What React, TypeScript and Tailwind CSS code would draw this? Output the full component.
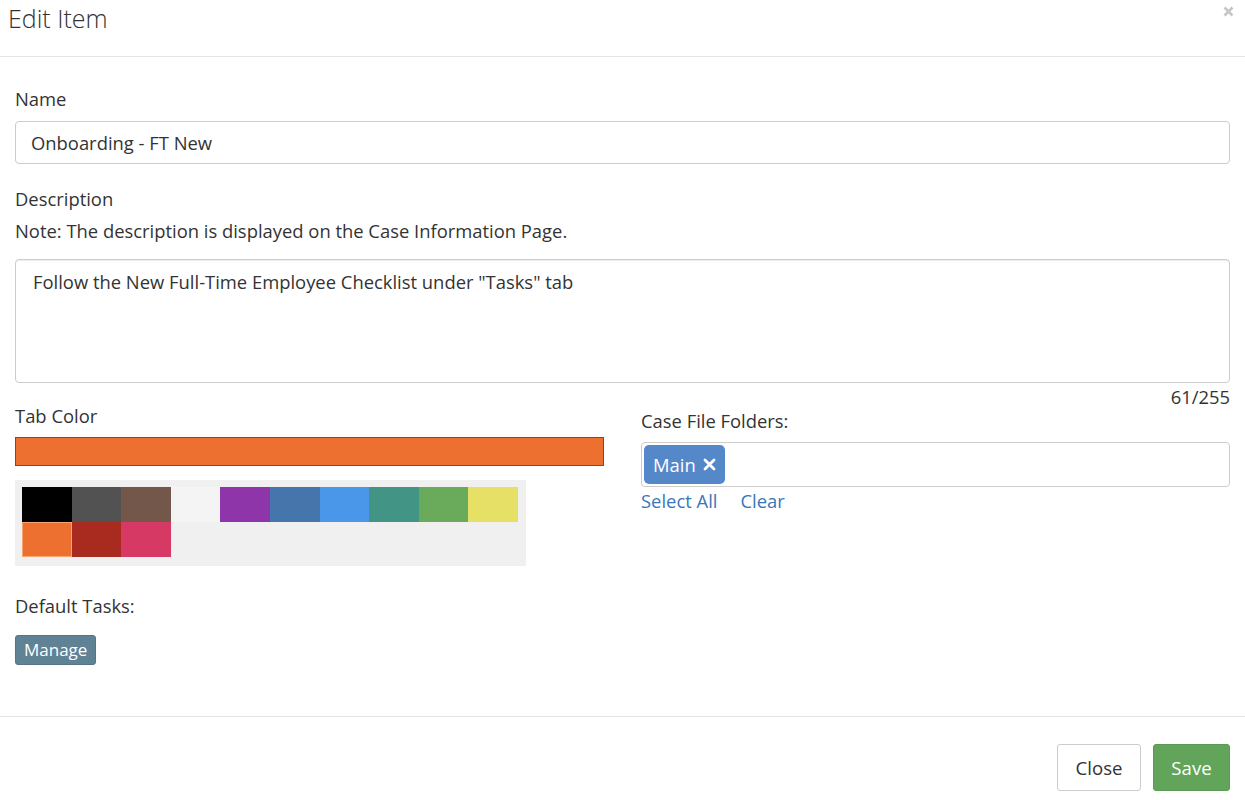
import React from "react";

const swatches = [
  "#000000",
  "#525252",
  "#73574a",
  "#f4f4f4",
  "#8e35aa",
  "#4675ab",
  "#4a96e8",
  "#429485",
  "#6aab5b",
  "#e6e066",
  "#ed7030",
  "#a92a1e",
  "#d63964",
];

export default function App() {
  return (
    <div
      className="relative w-[1245px] h-[800px] bg-white text-[#333] overflow-hidden text-[18.4px]"
      style={{ fontFamily: '"Open Sans", sans-serif' }}
    >
      {/* Header */}
      <div className="relative h-[57px] border-b border-[#e5e5e5] px-[8px] pt-[1px]">
        <h4 className="text-[25px] font-light leading-[34px] text-[#333]">Edit Item</h4>
        <svg
          className="absolute right-[11px] top-[6px]"
          width="11"
          height="11"
          viewBox="0 0 11 11"
        >
          <path d="M1.5 1.5 L9.5 9.5 M9.5 1.5 L1.5 9.5" stroke="#c6c6c6" strokeWidth="2.6" />
        </svg>
      </div>

      {/* Body */}
      <div className="px-[15px] pt-[28px]">
        <div className="leading-[28px]">Name</div>
        <div className="mt-[8px] h-[43px] border border-[#ccc] rounded-[4px] flex items-center pl-[15px]">
          Onboarding - FT New
        </div>

        <div className="mt-[21px] leading-[28px]">Description</div>
        <div className="mt-[6px] leading-[24px]">
          Note: The description is displayed on the Case Information Page.
        </div>
        <div className="mt-[16px] h-[124px] border border-[#ccc] rounded-[4px] shadow-[inset_0_1px_1px_rgba(0,0,0,0.075)] pl-[17px] pt-[10px] leading-[24px]">
          Follow the New Full-Time Employee Checklist under "Tasks" tab
        </div>
        <div className="text-right leading-[26px] mt-[1px]">61/255</div>

        <div className="grid grid-cols-2 gap-[37px] -mt-[7px]">
          {/* Left column */}
          <div>
            <div className="leading-[26px]">Tab Color</div>
            <div className="mt-[8px] h-[29px] bg-[#ed7030] border border-[#555]" />
            <div className="mt-[14px] w-[511px] h-[86px] bg-[#f0f0f0] p-[7px]">
              <div className="grid grid-cols-10 w-[496px]">
                {swatches.map((c, i) => (
                  <div
                    key={i}
                    className={
                      i === 10
                        ? "h-[35px] border-[1.5px] border-[#f7a46e]"
                        : "h-[35px]"
                    }
                    style={{ background: c }}
                  />
                ))}
              </div>
            </div>

            <div className="mt-[27px] leading-[26px]">Default Tasks:</div>
            <button className="mt-[16px] h-[30px] px-[8px] bg-[#5f8294] rounded-[3px] text-white text-[17px] leading-[28px] border border-[#557586]">
              Manage
            </button>
          </div>

          {/* Right column */}
          <div className="pt-[5px]">
            <div className="leading-[26px]">Case File Folders:</div>
            <div className="mt-[8px] h-[45px] border border-[#ccc] rounded-[4px] flex items-center pl-[2px]">
              <span className="h-[39px] px-[9px] bg-[#5588c8] rounded-[5px] text-white flex items-center gap-[7px]">
                Main
                <svg width="13" height="13" viewBox="0 0 13 13">
                  <path d="M2 2 L11 11 M11 2 L2 11" stroke="white" strokeWidth="2.8" strokeLinecap="round" />
                </svg>
              </span>
            </div>
            <div className="flex gap-[23px] text-[#3a76b9] leading-[26px] mt-[1px]">
              <span>Select All</span>
              <span>Clear</span>
            </div>
          </div>
        </div>
      </div>

      {/* Footer */}
      <div className="absolute top-[716px] left-0 w-[1245px] border-t border-[#e5e5e5] flex justify-end gap-[12px] px-[15px] pt-[27px]">
        <button className="h-[47px] w-[84px] border border-[#ccc] rounded-[3px] bg-white text-[18.6px] text-[#333]">
          Close
        </button>
        <button className="h-[47px] w-[77px] border border-[#5a9a52] rounded-[3px] bg-[#62a55a] text-[18.6px] text-white">
          Save
        </button>
      </div>
    </div>
  );
}
